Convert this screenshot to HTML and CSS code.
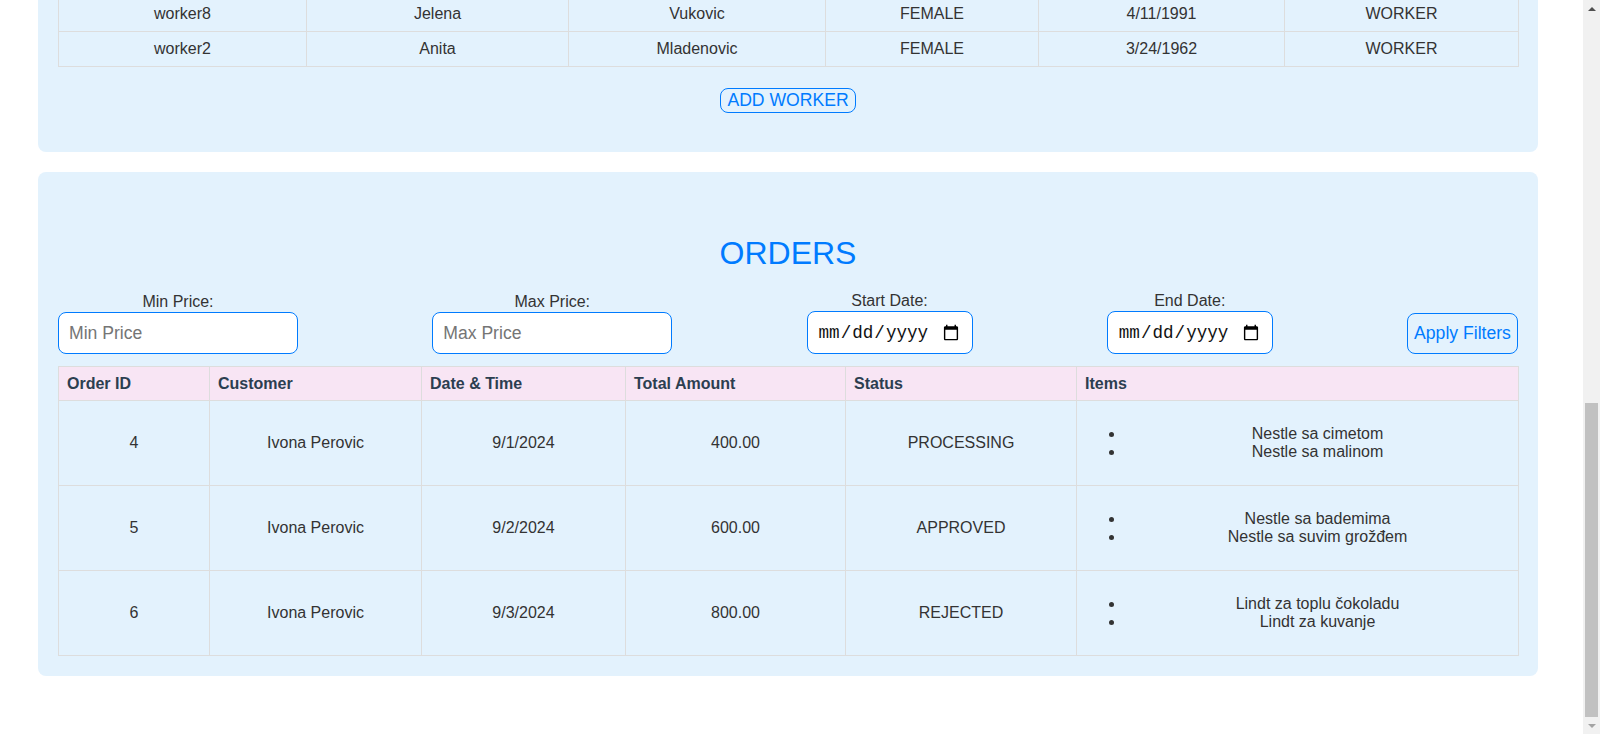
FILE: index.html
```html
<!DOCTYPE html>
<html lang="en">
<head>
<meta charset="utf-8">
<title>Admin Dashboard</title>
<link rel="stylesheet" href="styles.css">
</head>
<body>
<div class="page">
  <section class="card">
    <h2 class="card-title">WORKERS</h2>
    <table class="data-table workers-table">
      <colgroup>
        <col class="w-c1"><col class="w-c2"><col class="w-c3"><col class="w-c4"><col class="w-c5"><col class="w-c6">
      </colgroup>
      <thead>
        <tr><th>Username</th><th>First Name</th><th>Last Name</th><th>Gender</th><th>Birth Date</th><th>Role</th></tr>
      </thead>
      <tbody>
        <tr><td>manager1</td><td>Marko</td><td>Markovic</td><td>MALE</td><td>5/12/1985</td><td>MANAGER</td></tr>
        <tr><td>manager2</td><td>Petar</td><td>Petrovic</td><td>MALE</td><td>7/3/1979</td><td>MANAGER</td></tr>
        <tr><td>worker1</td><td>Milan</td><td>Jovanovic</td><td>MALE</td><td>2/14/1990</td><td>WORKER</td></tr>
        <tr><td>worker3</td><td>Ana</td><td>Nikolic</td><td>FEMALE</td><td>8/21/1993</td><td>WORKER</td></tr>
        <tr><td>worker4</td><td>Nikola</td><td>Ilic</td><td>MALE</td><td>1/9/1988</td><td>WORKER</td></tr>
        <tr><td>worker5</td><td>Jovana</td><td>Stojanovic</td><td>FEMALE</td><td>11/30/1995</td><td>WORKER</td></tr>
        <tr><td>worker6</td><td>Stefan</td><td>Pavlovic</td><td>MALE</td><td>6/17/1987</td><td>WORKER</td></tr>
        <tr><td>worker7</td><td>Milica</td><td>Djordjevic</td><td>FEMALE</td><td>9/5/1992</td><td>WORKER</td></tr>
        <tr><td>worker9</td><td>Luka</td><td>Popovic</td><td>MALE</td><td>3/2/1994</td><td>WORKER</td></tr>
        <tr><td>worker10</td><td>Marija</td><td>Kostic</td><td>FEMALE</td><td>12/19/1989</td><td>WORKER</td></tr>
        <tr><td>worker11</td><td>Vuk</td><td>Lazic</td><td>MALE</td><td>4/25/1991</td><td>WORKER</td></tr>
        <tr><td>worker12</td><td>Teodora</td><td>Maric</td><td>FEMALE</td><td>10/8/1996</td><td>WORKER</td></tr>
        <tr><td>worker13</td><td>Filip</td><td>Savic</td><td>MALE</td><td>7/14/1986</td><td>WORKER</td></tr>
        <tr><td>worker14</td><td>Sara</td><td>Todorovic</td><td>FEMALE</td><td>2/28/1997</td><td>WORKER</td></tr>
        <tr><td>worker15</td><td>Dusan</td><td>Ristic</td><td>MALE</td><td>5/1/1984</td><td>WORKER</td></tr>
        <tr><td>worker16</td><td>Ivana</td><td>Zivkovic</td><td>FEMALE</td><td>1/22/1993</td><td>WORKER</td></tr>
        <tr><td>worker17</td><td>Aleksa</td><td>Milosevic</td><td>MALE</td><td>8/11/1990</td><td>WORKER</td></tr>
        <tr><td>worker18</td><td>Katarina</td><td>Stankovic</td><td>FEMALE</td><td>6/6/1998</td><td>WORKER</td></tr>
        <tr><td>worker19</td><td>Nemanja</td><td>Obradovic</td><td>MALE</td><td>3/16/1983</td><td>WORKER</td></tr>
        <tr><td>worker20</td><td>Tamara</td><td>Vasic</td><td>FEMALE</td><td>12/3/1991</td><td>WORKER</td></tr>
        <tr><td>worker8</td><td>Jelena</td><td>Vukovic</td><td>FEMALE</td><td>4/11/1991</td><td>WORKER</td></tr>
        <tr><td>worker2</td><td>Anita</td><td>Mladenovic</td><td>FEMALE</td><td>3/24/1962</td><td>WORKER</td></tr>
      </tbody>
    </table>
    <div class="center-row">
      <button class="outline-btn add-btn" type="button">ADD WORKER</button>
    </div>
  </section>

  <section class="card">
    <h2 class="card-title">ORDERS</h2>
    <div class="filters">
      <div class="filter-group">
        <label class="filter-label" for="minPrice">Min Price:</label>
        <input class="filter-input text-input" id="minPrice" type="number" placeholder="Min Price">
      </div>
      <div class="filter-group">
        <label class="filter-label" for="maxPrice">Max Price:</label>
        <input class="filter-input text-input" id="maxPrice" type="number" placeholder="Max Price">
      </div>
      <div class="filter-group">
        <label class="filter-label" for="startDate">Start Date:</label>
        <input class="filter-input date-input" id="startDate" type="date">
      </div>
      <div class="filter-group">
        <label class="filter-label" for="endDate">End Date:</label>
        <input class="filter-input date-input" id="endDate" type="date">
      </div>
      <button class="outline-btn apply-btn" type="button">Apply Filters</button>
    </div>
    <table class="data-table orders-table">
      <colgroup>
        <col class="o-c1"><col class="o-c2"><col class="o-c3"><col class="o-c4"><col class="o-c5"><col class="o-c6">
      </colgroup>
      <thead>
        <tr><th>Order ID</th><th>Customer</th><th>Date &amp; Time</th><th>Total Amount</th><th>Status</th><th>Items</th></tr>
      </thead>
      <tbody>
        <tr>
          <td>4</td><td>Ivona Perovic</td><td>9/1/2024</td><td>400.00</td><td>PROCESSING</td>
          <td><ul class="items"><li>Nestle sa cimetom</li><li>Nestle sa malinom</li></ul></td>
        </tr>
        <tr>
          <td>5</td><td>Ivona Perovic</td><td>9/2/2024</td><td>600.00</td><td>APPROVED</td>
          <td><ul class="items"><li>Nestle sa bademima</li><li>Nestle sa suvim grožđem</li></ul></td>
        </tr>
        <tr>
          <td>6</td><td>Ivona Perovic</td><td>9/3/2024</td><td>800.00</td><td>REJECTED</td>
          <td><ul class="items"><li>Lindt za toplu čokoladu</li><li>Lindt za kuvanje</li></ul></td>
        </tr>
      </tbody>
    </table>
  </section>
</div>

<div class="scrollbar" aria-hidden="true">
  <div class="sb-btn"><span class="sb-arrow sb-up"></span></div>
  <div class="sb-track"><div class="sb-thumb"></div></div>
  <div class="sb-btn"><span class="sb-arrow sb-down"></span></div>
</div>

<script src="script.js"></script>
</body>
</html>
```

FILE: styles.css
```css
* { box-sizing: border-box; }

html, body {
  margin: 0;
  padding: 0;
  background: #ffffff;
}

body {
  font-family: "Liberation Sans", Arial, sans-serif;
  font-size: 16px;
  color: #333333;
}

.page {
  padding: 20px 0 38px 38px;
}

.card {
  width: 1500px;
  background: #e3f2fd;
  border-radius: 8px;
  padding: 20px;
  margin-bottom: 20px;
}

.card-title {
  margin: 43px 0 20px;
  font-size: 32px;
  font-weight: normal;
  line-height: 37px;
  color: #007bff;
  text-align: center;
}

.data-table {
  width: 1460px;
  border-collapse: collapse;
  table-layout: fixed;
}

.data-table th,
.data-table td {
  border: 1px solid #dddddd;
  padding: 8px;
  line-height: 18px;
}

.data-table th {
  background: #f8e5f4;
  text-align: left;
  font-weight: bold;
  color: #2c3e50;
}

.orders-table th {
  line-height: 17px;
}

.data-table td {
  text-align: center;
  vertical-align: middle;
  color: #333333;
}

.w-c1 { width: 248px; }
.w-c2 { width: 262px; }
.w-c3 { width: 257px; }
.w-c4 { width: 213px; }
.w-c5 { width: 246px; }
.w-c6 { width: 234px; }

.o-c1 { width: 151px; }
.o-c2 { width: 212px; }
.o-c3 { width: 204px; }
.o-c4 { width: 220px; }
.o-c5 { width: 231px; }
.o-c6 { width: 442px; }

.items {
  margin: 16px 0;
  padding: 0 0 0 40px;
  text-align: center;
}

.items li {
  line-height: 18px;
}

.center-row {
  display: flex;
  justify-content: center;
  margin-top: 21px;
  margin-bottom: 19px;
}

.outline-btn {
  font-family: "Liberation Sans", Arial, sans-serif;
  font-size: 17.6px;
  color: #007bff;
  background: transparent;
  border: 1px solid #007bff;
  border-radius: 8px;
  cursor: pointer;
}

.add-btn {
  height: 25px;
  padding: 0 6px;
  line-height: 21px;
}

.filters {
  display: flex;
  justify-content: space-between;
  align-items: flex-end;
  width: 1460px;
  margin-bottom: 12px;
}

.filter-group {
  display: flex;
  flex-direction: column;
  align-items: center;
}

.filter-label {
  font-size: 16px;
  line-height: 18px;
  margin-bottom: 1px;
  color: #333333;
}

.filter-input {
  background: #ffffff;
  border: 1px solid #007bff;
  border-radius: 8px;
  padding: 0 10px;
  font-size: 17.6px;
  color: #333333;
}

.text-input {
  width: 240px;
  height: 42px;
  font-family: "Liberation Sans", Arial, sans-serif;
}

.text-input::placeholder {
  color: #757575;
}

.text-input::-webkit-outer-spin-button,
.text-input::-webkit-inner-spin-button {
  -webkit-appearance: none;
  margin: 0;
}

.date-input {
  width: 166px;
  height: 43px;
  font-family: "Liberation Mono", "DejaVu Sans Mono", monospace;
  color: #111111;
}

.apply-btn {
  width: 111px;
  height: 41px;
  padding: 0 6px;
}

/* Browser-style vertical scrollbar drawn over the right edge */
.scrollbar {
  position: fixed;
  top: 0;
  right: 0;
  width: 17px;
  height: 100vh;
  background: #f1f1f1;
  display: flex;
  flex-direction: column;
}

.sb-btn {
  height: 17px;
  flex: none;
  display: flex;
  align-items: center;
  justify-content: center;
}

.sb-arrow {
  width: 0;
  height: 0;
  border-left: 4px solid transparent;
  border-right: 4px solid transparent;
}

.sb-up {
  border-bottom: 4px solid #505050;
}

.sb-down {
  border-top: 4px solid #a3a3a3;
}

.sb-track {
  flex: 1;
  display: flex;
  flex-direction: column;
  justify-content: flex-end;
  padding: 0 2px;
}

.sb-thumb {
  height: 314px;
  background: #c1c1c1;
}
```

FILE: script.js
```js
function scrollToBottom() {
  window.scrollTo(0, document.documentElement.scrollHeight);
}
scrollToBottom();
window.addEventListener('load', scrollToBottom);
```
